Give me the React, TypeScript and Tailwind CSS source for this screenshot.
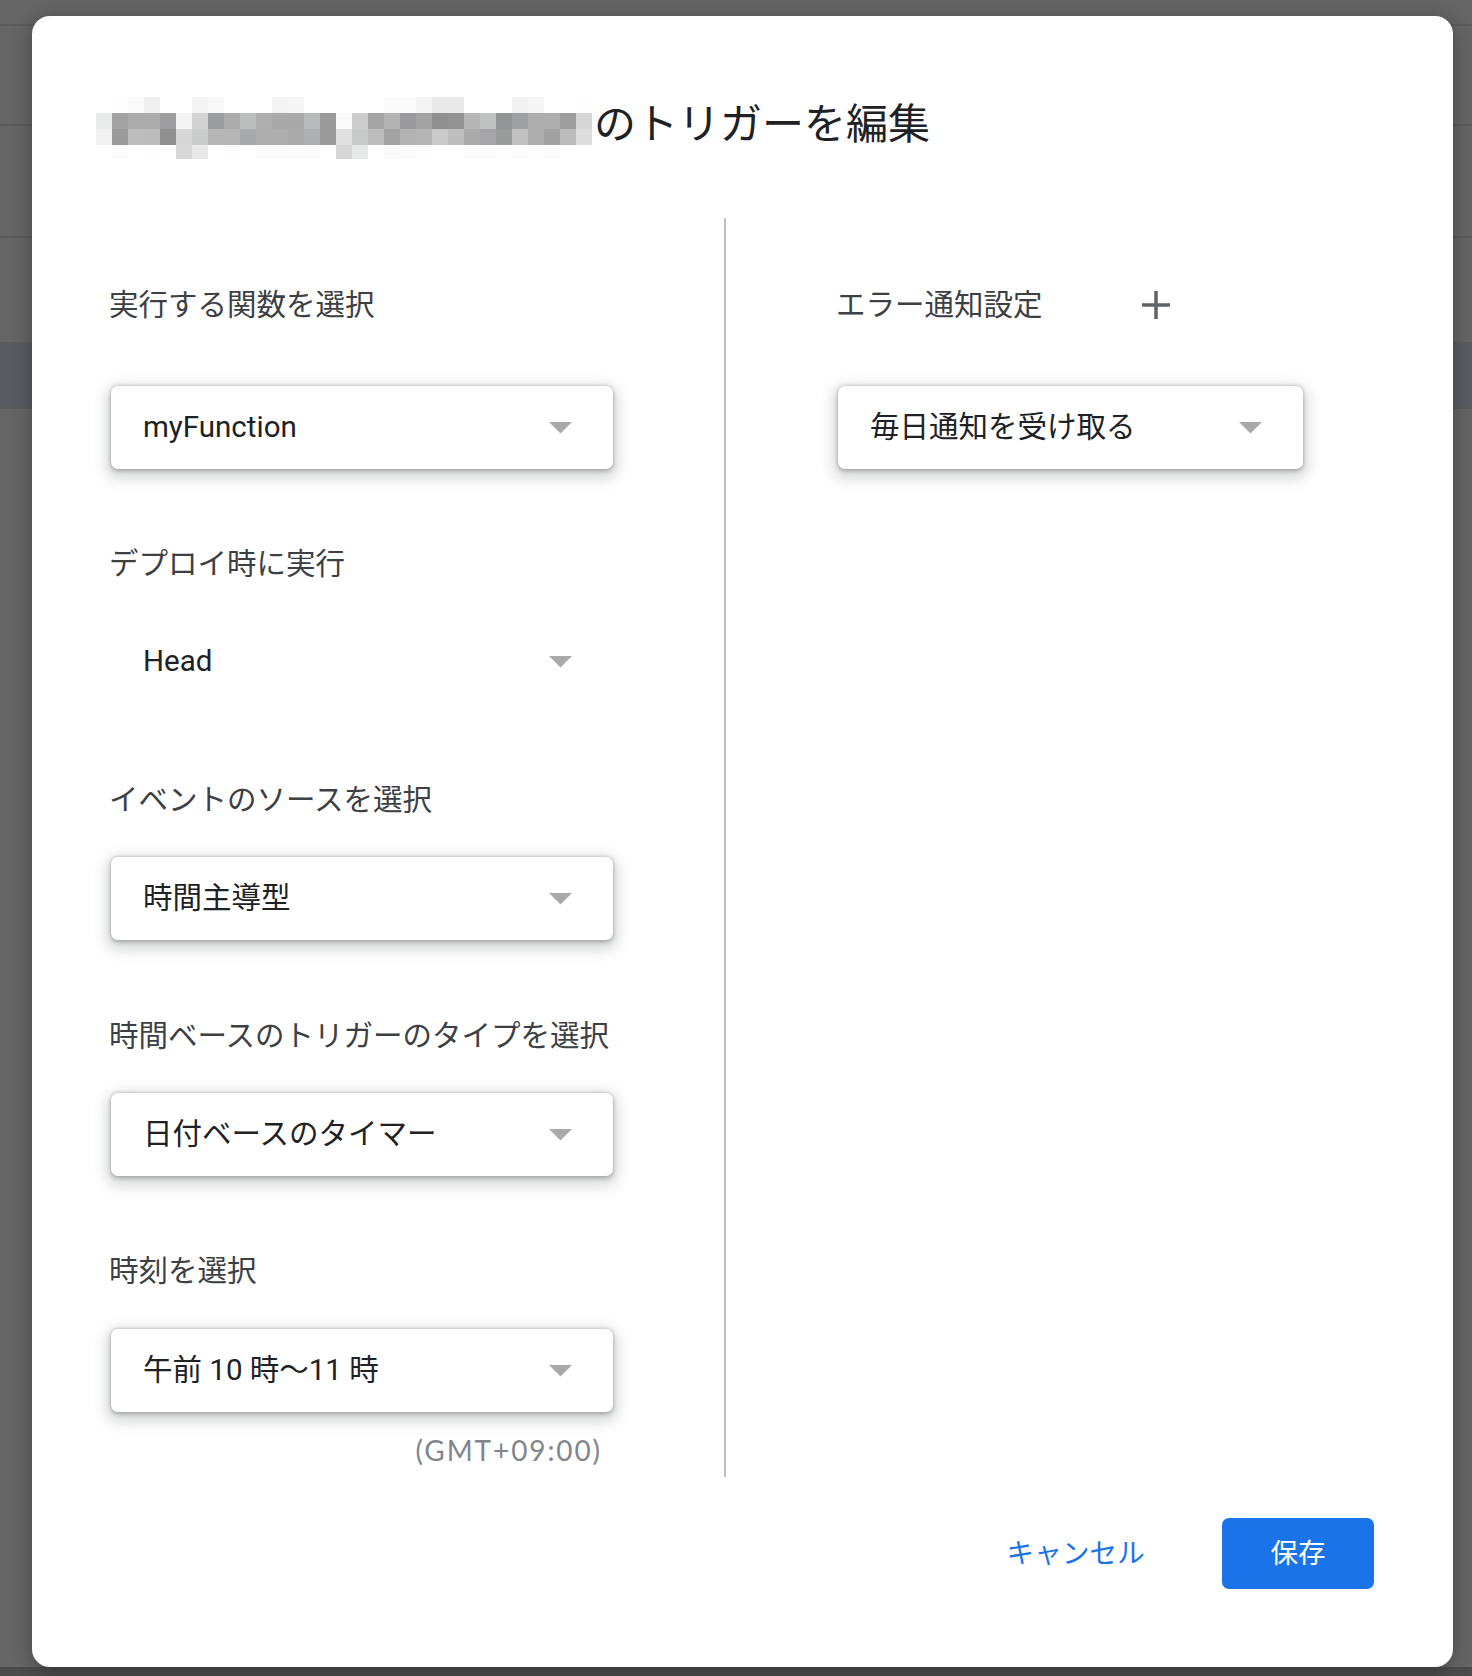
const mosaic: string[][] = [
  ["#fff","#fdfdfd","#fafafa","#f0f0f0","#fff","#fff","#f3f3f3","#f8f8f8","#fff","#fff","#fff","#f3f3f3","#f5f5f5","#fff","#fff","#fff","#fff","#fff","#fbfbfb","#fbfbfb","#f4f4f4","#e9e9e9","#e9e9e9","#fff","#fff","#fff","#f1f1f1","#f4f5f4","#fff","#fff","#fdfdfd"],
  ["#e9ebea","#a3a3a3","#ababab","#ababab","#9d9d9f","#f3f3f3","#d3d3d3","#9b9c9e","#ababab","#bdbfbe","#afafaf","#a9a9a9","#a8a8a8","#b8b9bb","#9a9a9a","#fafafa","#cdcdcd","#a5a5a5","#b2b2b2","#9b9b9d","#a3a3a3","#8f8f8f","#939393","#b5b5b5","#c0c2c1","#949596","#9e9fa1","#adadad","#adadad","#9e9e9e","#d6d6d6"],
  ["#f1f1f1","#9a9a9a","#bebebe","#bcbcbc","#909090","#d6d6d6","#cbcdcc","#b6b6b6","#b6b6b6","#a8a9ab","#adadad","#adadad","#aaaaaa","#aeafb1","#9a9a9a","#e0e0e0","#c9cbca","#bdbdbd","#a3a3a3","#b2b2b2","#b5b5b5","#cacaca","#bebebe","#aaaaaa","#a6a6a8","#9a9c9b","#c1c1c1","#adadad","#a1a1a1","#bcbcbc","#dddddd"],
  ["#fff","#fcfcfc","#fff","#fdfdfd","#fff","#d7d7d7","#e8e8e8","#fff","#fdfdfd","#fff","#fbfbfb","#fcfcfc","#fbfbfb","#fcfcfc","#fff","#d6d6d6","#e7e9e8","#fff","#fafafa","#fbfbfb","#fdfdfd","#fff","#fff","#fcfcfc","#fcfcfc","#fdfdfd","#fcfcfc","#fdfdfd","#fcfcfc","#fff","#fff"],
];

function Mosaic() {
  return (
    <svg width="496" height="62" viewBox="0 0 496 62" className="shrink-0">
      {mosaic.map((row, r) =>
        row.map((c, i) => (
          <rect key={`${r}-${i}`} x={i * 16} y={r * 16} width="16" height={r === 3 ? 14 : 16} fill={c} />
        ))
      )}
    </svg>
  );
}

function Caret() {
  return (
    <svg width="23" height="12" viewBox="0 0 23 12" className="shrink-0">
      <path d="M0 0 L23 0 L11.5 11.5 Z" fill="#a9a9a9" />
    </svg>
  );
}

function Select({ value, width, flat }: { value: string; width: string; flat?: boolean }) {
  return (
    <div
      className={`${width} h-[83px] flex items-center justify-between pl-[32px] pr-[41px] rounded-[7px] bg-white ${
        flat ? "" : "shadow-[0_2px_4px_0_rgba(60,64,67,0.35),0_5px_14px_5px_rgba(60,64,67,0.2),0_-1px_3px_0_rgba(60,64,67,0.15)]"
      }`}
    >
      <span className="text-[29.5px] leading-[30px] text-[#202124] pb-[2px]">{value}</span>
      <Caret />
    </div>
  );
}

function Label({ children }: { children: React.ReactNode }) {
  return <div className="-ml-[2px] text-[29.5px] leading-[30px] text-[#3c4043]">{children}</div>;
}

export default function App() {
  return (
    <div className="relative h-[1676px] w-full overflow-hidden bg-[#656565] font-['Roboto','Noto_Sans_CJK_JP',sans-serif]">
      {/* dimmed page behind the dialog */}
      <div className="flex flex-col">
        <div className="h-[26px] border-b-2 border-[#5b5b5b]" />
        <div className="h-[100px] border-b-2 border-[#5b5b5b]" />
        <div className="h-[112px] border-b-2 border-[#5b5b5b]" />
        <div className="h-[106px] border-b-2 border-[#5b5b5b]" />
        <div className="h-[65px] border-b-2 border-[#5b5b5b] bg-[#585b61]" />
      </div>
      <div className="absolute left-0 right-0 bottom-0 h-[9px] bg-[#4c4c4c]" />

      <div className="absolute left-[32px] top-[16px] w-[1421px] h-[1651px] rounded-[18px] bg-white shadow-[0_4px_20px_rgba(0,0,0,0.3)] flex flex-col pt-[81px] pl-[64px] pr-[79px] pb-[78px]">
        <div className="flex items-start h-[62px]">
          <Mosaic />
          <h1 className="ml-[2px] mt-[7px] text-[42px] leading-[42px] font-normal text-[#202124]">のトリガーを編集</h1>
        </div>

        <div className="mt-[59px] ml-[15px] flex h-[1259px]">
          <div className="w-[613px] flex flex-col pt-[72px]">
            <Label>実行する関数を選択</Label>
            <div className="mt-[66px]">
              <Select value="myFunction" width="w-[502px]" />
            </div>
            <div className="mt-[80px]">
              <Label>デプロイ時に実行</Label>
            </div>
            <div className="mt-[41px]">
              <Select value="Head" width="w-[502px]" flat />
            </div>
            <div className="mt-[82px]">
              <Label>イベントのソースを選択</Label>
            </div>
            <div className="mt-[42px]">
              <Select value="時間主導型" width="w-[502px]" />
            </div>
            <div className="mt-[81px]">
              <Label>時間ベースのトリガーのタイプを選択</Label>
            </div>
            <div className="mt-[42px]">
              <Select value="日付ベースのタイマー" width="w-[502px]" />
            </div>
            <div className="mt-[80px]">
              <Label>時刻を選択</Label>
            </div>
            <div className="mt-[43px]">
              <Select value="午前 10 時～11 時" width="w-[502px]" />
            </div>
            <div className="mt-[23px] w-[502px] pr-[11px] text-right font-['Lato',sans-serif] text-[28px] leading-[30px] tracking-[1.9px] text-[#80868b]">
              (GMT+09:00)
            </div>
          </div>

          <div className="w-[2px] bg-[#bdc1c6]" />

          <div className="flex flex-col pl-[112px] pt-[72px]">
            <div className="flex items-center">
              <Label>エラー通知設定</Label>
              <svg width="28" height="28" viewBox="0 0 28 28" className="ml-[99px]">
                <path d="M14 0 V28 M0 14 H28" stroke="#5f6368" strokeWidth="3.5" />
              </svg>
            </div>
            <div className="mt-[66px]">
              <Select value="毎日通知を受け取る" width="w-[465px]" />
            </div>
          </div>
        </div>

        <div className="mt-[41px] flex items-center justify-end">
          <button className="text-[27.5px] leading-[30px] text-[#1a73e8] tracking-[0.2px]">キャンセル</button>
          <button className="ml-[77px] w-[152px] h-[71px] rounded-[7px] bg-[#1a73e8] text-white text-[27.5px] leading-[30px]">
            保存
          </button>
        </div>
      </div>
    </div>
  );
}
